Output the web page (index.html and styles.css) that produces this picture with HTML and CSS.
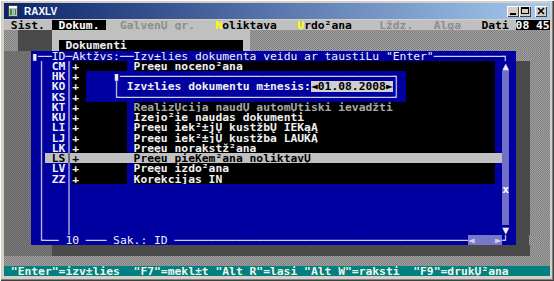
FILE: index.html
```html
<!DOCTYPE html>
<html lang="lv">
<head>
    <meta charset="UTF-8">
    <title>RAXLV</title>
    <link rel="stylesheet" href="styles.css">
</head>
<body>
    <div class="window">
        <div class="titlebar">
            <svg class="app-icon" width="10" height="12" viewBox="0 0 10 12">
                <rect x="0.5" y="0.5" width="9" height="11" fill="#c0c0c0" stroke="#404040"/>
                <rect x="1" y="1" width="8" height="2" fill="#ffffff"/>
                <rect x="2" y="4" width="2" height="6" fill="#2f8f4f"/>
                <rect x="5" y="4" width="1" height="6" fill="#6fbf7f"/>
                <rect x="7" y="4" width="1" height="6" fill="#2f8f4f"/>
            </svg>
            <span class="title">RAXLV</span>
            <div class="controls">
                <div class="ctl">
                    <svg width="12" height="11" viewBox="0 0 12 11"><rect x="3" y="7" width="6" height="2" fill="#000"/></svg>
                </div>
                <div class="ctl">
                    <svg width="12" height="11" viewBox="0 0 12 11"><rect x="2.5" y="1.5" width="7" height="6" fill="none" stroke="#000"/><rect x="2" y="1" width="8" height="2" fill="#000"/></svg>
                </div>
                <div class="ctl close">
                    <svg width="12" height="11" viewBox="0 0 12 11"><path d="M3 2 L9 8 M9 2 L3 8" stroke="#000" stroke-width="1.6"/></svg>
                </div>
            </div>
        </div>

        <!-- DOS screen, 80 x 25 -->
        <div class="screen">
            <div class="r mb"><span> Sist. </span><span class="sel"> Dokum. </span><span class="off">  GalvenŲ gr.   </span><span class="key">N</span><span>oliktava   </span><span class="key">Ų</span><span>rdo²ana    </span><span class="off">Lždz.   Alga   </span><span>Dati </span><span class="clk f">08 45</span></div>
            <div class="r"><span class="g">  </span><span class="sh">     </span><span class="lt drop"></span><span class="g f"></span></div>
            <div class="r"><span class="g">  </span><span class="sh">     </span><span class="lt"> </span><span class="k drop-in"> Dokumenti</span><span class="lt"> </span><span class="g f"></span></div>
            <div class="r"><span class="dim">    </span><span class="b ln">▮──ID─Aktžvs:──Izv±lies dokumenta veidu ar taustiĻu "Enter"──────────┐ </span><span class="g f"></span></div>
            <div class="r"><span class="dim">    </span><span class="b"> │ CM│</span><span class="k">+       </span><span class="b"> </span><span class="k f">Preęu noceno²ana</span><span class="b"> ▲ </span><span class="sh">  </span><span class="g">   </span></div>
            <div class="r"><span class="dim">    </span><span class="b"> │ HK│</span><span class="k">+ </span><span class="b">    ▮────────────────────────────────────────┐ </span><span class="k f"></span><span class="b"> </span><span class="sb"> </span><span class="b"> </span><span class="sh">  </span><span class="g">   </span></div>
            <div class="r"><span class="dim">    </span><span class="b"> │ KO│</span><span class="k">+ </span><span class="b">    │ Izv±lies dokumentu m±nesis:</span><span class="fld">◄01.08.2008►</span><span class="b">│ </span><span class="k f"></span><span class="b"> </span><span class="sb"> </span><span class="b"> </span><span class="sh">  </span><span class="g">   </span></div>
            <div class="r"><span class="dim">    </span><span class="b"> │ KS│</span><span class="k">+ </span><span class="b">    └────────────────────────────────────────┘ </span><span class="k f"></span><span class="b"> </span><span class="sb"> </span><span class="b"> </span><span class="sh">  </span><span class="g">   </span></div>
            <div class="r"><span class="dim">    </span><span class="b"> │ KT│</span><span class="k">+       </span><span class="b"> </span><span class="k dis f">RealizŲcija naudŲ automŲtiski ievadžti</span><span class="b"> </span><span class="sb"> </span><span class="b"> </span><span class="sh">  </span><span class="g">   </span></div>
            <div class="r"><span class="dim">    </span><span class="b"> │ KU│</span><span class="k">+       </span><span class="b"> </span><span class="k f">Izejo²ie naudas dokumenti</span><span class="b"> </span><span class="sb"> </span><span class="b"> </span><span class="sh">  </span><span class="g">   </span></div>
            <div class="r"><span class="dim">    </span><span class="b"> │ LI│</span><span class="k">+       </span><span class="b"> </span><span class="k f">Preęu iek²±jŲ kustžbŲ IEKąĄ</span><span class="b"> </span><span class="sb"> </span><span class="b"> </span><span class="sh">  </span><span class="g">   </span></div>
            <div class="r"><span class="dim">    </span><span class="b"> │ LJ│</span><span class="k">+       </span><span class="b"> </span><span class="k f">Preęu iek²±jŲ kustžba LAUKĄ</span><span class="b"> </span><span class="sb"> </span><span class="b"> </span><span class="sh">  </span><span class="g">   </span></div>
            <div class="r"><span class="dim">    </span><span class="b"> │ LK│</span><span class="k">+       </span><span class="b"> </span><span class="k f">Preęu norakstž²ana</span><span class="b"> </span><span class="sb"> </span><span class="b"> </span><span class="sh">  </span><span class="g">   </span></div>
            <div class="r"><span class="dim">    </span><span class="b"> │</span><span class="hl f"> LS│+        Preęu pieĶem²ana noliktavŲ</span><span class="sb"> </span><span class="b"> </span><span class="sh">  </span><span class="g">   </span></div>
            <div class="r"><span class="dim">    </span><span class="b"> │ LV│</span><span class="k">+       </span><span class="b"> </span><span class="k f">Preęu izdo²ana</span><span class="b"> </span><span class="sb"> </span><span class="b"> </span><span class="sh">  </span><span class="g">   </span></div>
            <div class="r"><span class="dim">    </span><span class="b"> │ ZZ│</span><span class="k">+       </span><span class="b"> </span><span class="k f">Korekcijas IN</span><span class="b"> </span><span class="sb"> </span><span class="b"> </span><span class="sh">  </span><span class="g">   </span></div>
            <div class="r"><span class="dim">    </span><span class="b f"> │   │</span><span class="sb">x</span><span class="b"> </span><span class="sh">  </span><span class="g">   </span></div>
            <div class="r"><span class="dim">    </span><span class="b f"> │   │</span><span class="sb"> </span><span class="b"> </span><span class="sh">  </span><span class="g">   </span></div>
            <div class="r"><span class="dim">    </span><span class="b f"> │   │</span><span class="sb"> </span><span class="b"> </span><span class="sh">  </span><span class="g">   </span></div>
            <div class="r"><span class="dim">    </span><span class="b f"> │   │</span><span class="sb"> </span><span class="b"> </span><span class="sh">  </span><span class="g">   </span></div>
            <div class="r"><span class="dim">    </span><span class="b f"> │   │</span><span class="b">▼ </span><span class="sh">  </span><span class="g">   </span></div>
            <div class="r"><span class="dim">    </span><span class="b ln"> └── 10 ─── Sak.: ID ───────────────────────────────────────────</span><span class="thumb">◄   ►</span><span class="b">┘ </span><span class="sh">  </span><span class="g">   </span></div>
            <div class="r"><span class="dim">       </span><span class="sh f"></span><span class="g">   </span></div>
            <div class="r"><span class="g f"></span></div>
            <div class="r"><span class="st f"> "Enter"=izv±lies  "F7"=mekl±t "Alt R"=lasi "Alt W"=raksti  "F9"=drukŲ²ana</span></div>
        </div>
    </div>
</body>
</html>
```

FILE: styles.css
```css
/* Window chrome (classic Windows look) */
body {
    margin: 0;
    background-color: #d4d0c8;
}

.window {
    width: 554px;
    height: 281px;
    box-sizing: border-box;
    padding: 3px 4px 5px 4px;
    background-color: #d4d0c8;
    box-shadow: inset 1px 1px #ffffff, inset -1px -1px #404040, inset -2px -2px #808080;
    display: flex;
    flex-direction: column;
}

.titlebar {
    height: 16px;
    margin-bottom: 1px;
    display: flex;
    align-items: center;
    padding: 0 3px 0 4px;
    background: linear-gradient(to right, #0a246a, #a6caf0);
}

.app-icon {
    display: block;
}

.title {
    margin-left: 6px;
    color: #ffffff;
    font: bold 10px "Liberation Sans", Arial, sans-serif;
}

.controls {
    margin-left: auto;
    display: flex;
}

.ctl {
    width: 12px;
    height: 11px;
    background-color: #d4d0c8;
    box-shadow: inset 1px 1px #ffffff, inset -1px -1px #404040;
}

.ctl svg {
    display: block;
}

.ctl.close {
    margin-left: 4px;
}

/* The DOS text screen: 80 columns, 25 rows */
.screen {
    height: 256px;
    display: grid;
    grid-template-rows: repeat(25, 1fr);
    font: bold 11.336px/10.24px "DejaVu Sans Mono", monospace;
    color: #f0f0f0;
    background-color: #000000;
}

.r {
    display: flex;
    white-space: pre;
    overflow: hidden;
}

.r span {
    flex-shrink: 0;
}

.r .f {
    flex: 1;
    overflow: hidden;
}

/* menu bar */
.mb {
    background-color: #c0c0c0;
    color: #000000;
}

.sel,
.clk {
    background-color: #000000;
    color: #ffffff;
}

.off {
    color: #8e8e8e;
}

.key {
    color: #ffff00;
}

/* backgrounds */
.g {
    background: repeating-conic-gradient(#a2a2a2 0 25%, #7e7e7e 0 50%) 0 0 / 2px 2px;
}

.dim {
    background: repeating-conic-gradient(#7a7a7a 0 25%, #666666 0 50%) 0 0 / 2px 2px;
}

.sh {
    background-color: #4a4a4a;
}

.lt {
    background-color: #c0c0c0;
}

.drop {
    width: 29ch;
}

.drop-in {
    width: 27ch;
}

/* list window */
.b {
    background-color: #0000a0;
}

.k {
    background-color: #000000;
}

.ln {
    font-weight: normal;
}

.dis {
    color: #a8a8a8;
}

.hl {
    background-color: #c0c0c0;
    color: #000000;
}

.sb {
    background-color: #7070c8;
    color: #ffffff;
}

.thumb {
    background-color: #7878c8;
    color: #d0d0f4;
}

.fld {
    background-color: #d0d0d0;
    color: #000000;
}

/* status line */
.st {
    background-color: #008080;
    color: #f4f4e4;
}
```
